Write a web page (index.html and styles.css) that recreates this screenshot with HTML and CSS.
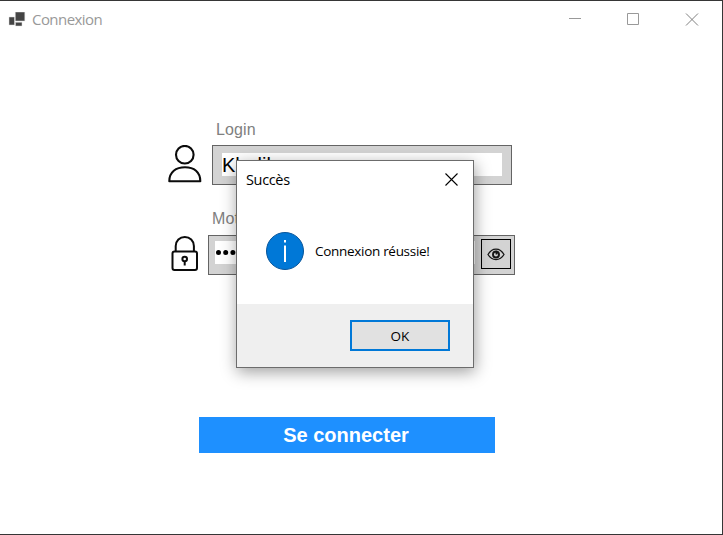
FILE: index.html
```
<!DOCTYPE html>
<html lang="fr">
<head>
<meta charset="utf-8">
<title>Connexion</title>
<link rel="stylesheet" href="styles.css">
</head>
<body>
<main class="window">
  <header class="titlebar">
    <svg class="app-icon" width="18" height="16" viewBox="0 0 18 16">
      <path fill="#444" stroke="#ddd" stroke-width=".5" d="M1 5h5.500v8H1zM7.300 0h9.500v9H7.300zM7.500 10.300h6.500v3.700H7.500z"/>
    </svg>
    <h1 class="window-title">Connexion</h1>
    <svg class="controls" width="131" height="14" viewBox="0 0 131 14" fill="none" stroke="#999">
      <path d="M0 5.500h12M58.500.500h11v11h-11z"/>
      <path d="M117 .5l12 12M129 .5l-12 12" stroke="#808080"/>
    </svg>
  </header>
  <form class="login">
    <label class="caption caption-login" for="login">Login</label>
    <div class="row row-login">
      <svg class="user-icon" width="34" height="38" viewBox="0 0 34 38" fill="none" stroke="#0b0b0b" stroke-width="2.100">
        <circle cx="16.800" cy="9.700" r="8.800"/>
        <path stroke-linejoin="round" d="M1.300 36.300C1.300 27 8 22.300 17 22.300S32.300 27 32.300 36.300z"/>
      </svg>
      <div class="field field-login"><div class="entry" id="login">Khalil</div></div>
    </div>
    <div class="caption caption-password">Mot de passe</div>
    <div class="row row-password">
      <svg class="lock-icon" width="28" height="36" viewBox="0 0 28 36" fill="none" stroke="#0b0b0b" stroke-width="2">
        <rect x="1.500" y="16.500" width="24.500" height="18.500" rx="2"/>
        <path d="M4.700 16.500V11a9 9 0 0 1 18.200 0v5.500"/>
        <circle cx="13.700" cy="24" r="2.300"/>
        <path d="M13.700 26v4.500"/>
      </svg>
      <div class="field field-password">
        <div class="entry entry-password">
          <svg width="80" height="23" viewBox="0 0 80 23"><path d="M3.500 11.500h60" stroke="#000" stroke-width="5" stroke-linecap="round" stroke-dasharray="0 7.200"/></svg>
        </div>
        <button class="reveal" type="button" aria-label="Afficher">
          <svg width="18" height="14" viewBox="0 0 18 14" fill="none" stroke="#161616" stroke-width="1.300">
            <path d="M1 7.500C5 .2 13 .2 17 7.500 13 14.300 5 14.300 1 7.500z"/>
            <path d="M9 4.500a3 3 0 1 0 3 3c0-1.700-1-2.700-2.500-3V7.500" stroke-width="1.900"/>
          </svg>
        </button>
      </div>
    </div>
    <button class="submit" type="button">Se connecter</button>
  </form>
  <section class="dialog" role="dialog">
    <header class="dialog-head">
      <h2 class="dialog-title">Succès</h2>
      <svg width="13" height="13" viewBox="0 0 13 13" stroke="#000" stroke-width="1.100"><path d="M.5.500l12 12M12.500.500l-12 12"/></svg>
    </header>
    <div class="dialog-body">
      <svg width="38" height="38" viewBox="0 0 38 38">
        <circle cx="19" cy="19" r="18.500" fill="#0078d7" stroke="#07559b"/>
        <path fill="#fff" d="M18 8h2v2.500h-2zM18 13.500h2V30h-2z"/>
      </svg>
      <p class="message">Connexion réussie!</p>
    </div>
    <footer class="dialog-foot"><button class="ok" type="button">OK</button></footer>
  </section>
</main>
</body>
</html>
```
FILE: styles.css
```
* { box-sizing: border-box; }
body { margin: 0; }
h1, h2, p { margin: 0; font-weight: 400; }
svg { display: block; flex: none; }
button { padding: 0; }

.window {
  position: relative;
  width: 723px;
  height: 535px;
  overflow: hidden;
  background: #fff;
  border: solid #363636;
  border-width: 1px 1px 1px 0;
}
.titlebar {
  display: flex;
  align-items: center;
  height: 37px;
  padding: 0 22px 0 8px;
}
.window-title {
  margin: -2px 0 0 6px;
  font: 15px/20px "Open Sans", sans-serif;
  letter-spacing: -0.55px;
  color: #999;
}
.controls { margin-left: auto; }

.login { font-family: "Liberation Sans", sans-serif; }
.caption {
  display: block;
  font-size: 16px;
  line-height: 20px;
  letter-spacing: 0.1px;
  color: #808080;
}
.caption-login { margin: 82px 0 0 216px; }
.caption-password { margin: 24px 0 0 212px; }
.row { display: flex; }
.row-login { margin: 5px 0 0 168px; }
.row-password { margin: 6px 0 0 171px; }
.field {
  display: flex;
  height: 40px;
  background: #d3d3d3;
  border: 1px solid #646464;
}
.field-login { width: 300px; margin-left: 10px; padding: 7px 9px; }
.field-password { width: 307px; margin-left: 9px; padding: 3px 3px 3px 6px; }
.entry {
  flex: 1;
  height: 23px;
  background: #fff;
  font-size: 20px;
  line-height: 24px;
  color: #000;
}
.entry-password { margin: 2px 6px 0 0; }
.reveal {
  display: flex;
  align-items: center;
  justify-content: center;
  width: 30px;
  height: 30px;
  background: #d3d3d3;
  border: 1px solid #000;
}
.submit {
  display: block;
  width: 296px;
  height: 36px;
  margin: 142px 0 0 199px;
  padding-right: 2px;
  background: #1e90ff;
  border: 0;
  color: #fff;
  font: bold 20px/36px "Liberation Sans", sans-serif;
}

.dialog {
  position: absolute;
  left: 236px;
  top: 159px;
  display: flex;
  flex-direction: column;
  width: 238px;
  height: 208px;
  background: #fff;
  border: 1px solid #6c6c6c;
  box-shadow: 1px 4px 15px rgba(0, 0, 0, .38);
  font-family: "Open Sans", sans-serif;
  color: #000;
}
.dialog-head {
  display: flex;
  align-items: center;
  justify-content: space-between;
  height: 36px;
  padding: 0 15px 0 9px;
}
.dialog-title { font-size: 14.5px; letter-spacing: -0.35px; }
.dialog-body {
  display: flex;
  align-items: center;
  flex: 1;
  padding: 0 0 0 29px;
}
.message { margin-left: 11px; font-size: 13.5px; letter-spacing: -0.3px; white-space: nowrap; }
.dialog-foot {
  display: flex;
  justify-content: flex-end;
  height: 63px;
  padding: 16px 23px;
  background: #efefef;
}
.ok {
  width: 100px;
  height: 31px;
  background: #e1e1e1;
  border: 2px solid #0078d7;
  color: #000;
  font: 13.5px/26px "Open Sans", sans-serif;
}
```
